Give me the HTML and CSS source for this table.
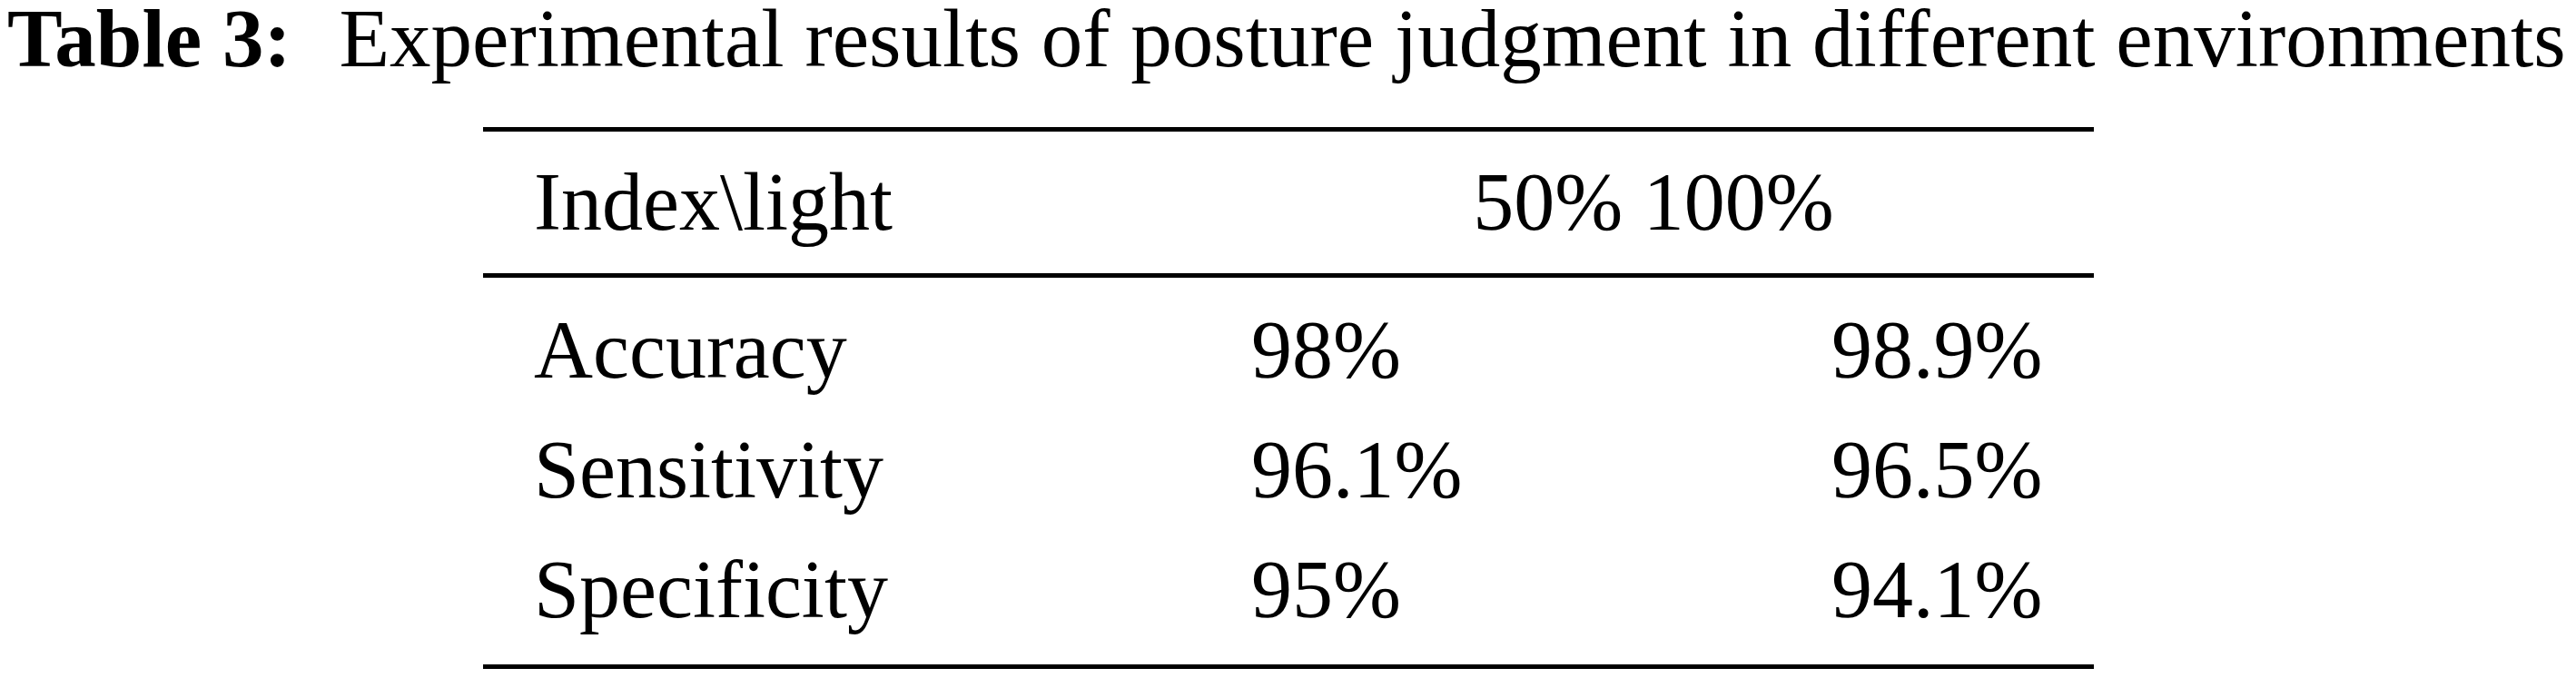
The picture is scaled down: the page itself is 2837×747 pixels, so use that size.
FILE: index.html
```html
<!DOCTYPE html>
<html lang="en">

<head>
  <meta charset="UTF-8">
  <title>Table 3</title>
  <link rel="stylesheet" href="styles.css">
</head>

<body>
  <div class="caption">
    <span class="caption-label">Table 3:</span>
    <span class="caption-text">Experimental results of posture judgment in different environments</span>
  </div>

  <table class="results">
    <colgroup>
      <col class="col-index">
      <col class="col-half">
      <col class="col-full">
    </colgroup>
    <thead>
      <tr>
        <th class="index-head">Index\light</th>
        <th class="light-head" colspan="2">50% 100%</th>
      </tr>
    </thead>
    <tbody>
      <tr>
        <td>Accuracy</td>
        <td>98%</td>
        <td>98.9%</td>
      </tr>
      <tr>
        <td>Sensitivity</td>
        <td>96.1%</td>
        <td>96.5%</td>
      </tr>
      <tr>
        <td>Specificity</td>
        <td>95%</td>
        <td>94.1%</td>
      </tr>
    </tbody>
  </table>
</body>

</html>
```

FILE: styles.css
```css
* {
  margin: 0;
  padding: 0;
  box-sizing: border-box;
}

body {
  font-family: 'Liberation Serif', 'Times New Roman', serif;
  font-size: 90px;
  color: #000;
  background: #fff;
}

.caption {
  padding-left: 8px;
  font-size: 91px;
  line-height: 86px;
  white-space: nowrap;
}

.caption-label {
  font-weight: bold;
  margin-right: 30px;
}

.results {
  margin-top: 54px;
  margin-left: 532px;
  width: 1774px;
  table-layout: fixed;
  border-collapse: separate;
  border-spacing: 0;
}

.col-index {
  width: 790px;
}

.col-half {
  width: 639px;
}

.col-full {
  width: 345px;
}

.results th,
.results td {
  font-weight: normal;
  text-align: left;
  line-height: 90px;
  padding: 21px 0 21px 56px;
  white-space: nowrap;
}

.results thead th {
  padding-top: 33px;
  padding-bottom: 33px;
  border-top: 5px solid #000;
  border-bottom: 5px solid #000;
}

.results th.light-head {
  text-align: center;
  padding-left: 14px;
}

.results tbody tr:first-child td {
  padding-top: 35px;
}

.results tbody tr:last-child td {
  padding-bottom: 37px;
  border-bottom: 5px solid #000;
}
```
